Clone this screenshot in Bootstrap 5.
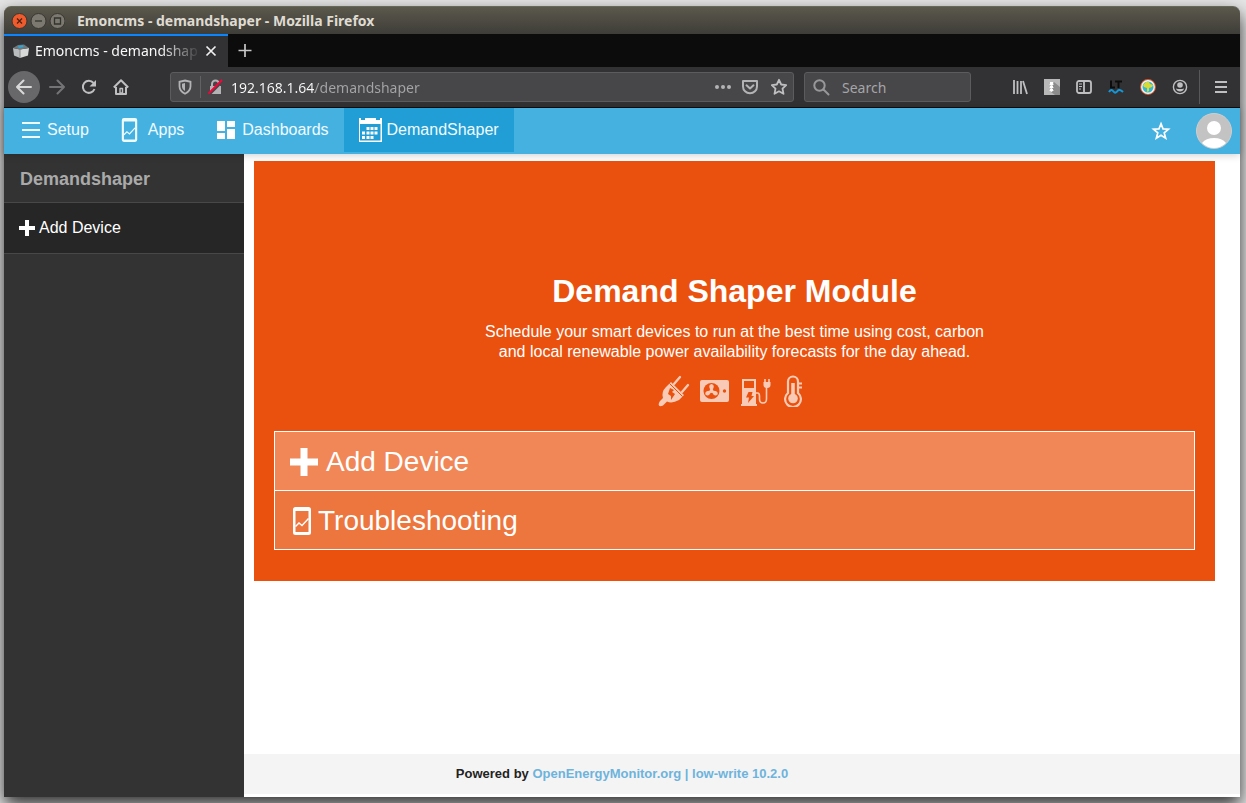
<!DOCTYPE html>
<html lang="en">
<head>
<meta charset="utf-8">
<meta name="viewport" content="width=device-width, initial-scale=1">
<title>Emoncms - demandshaper</title>
<link rel="stylesheet" href="https://cdn.jsdelivr.net/npm/bootstrap@5.3.0/dist/css/bootstrap.min.css">
<style>
body{background:#e6e6e6;padding:6px 6px 6px 4px;font-family:"Liberation Sans",Arial,sans-serif;font-size:16px;line-height:20px;overflow:hidden}
svg{display:block;flex:none}
a{text-decoration:none}
button{background:none;border:0;padding:0;color:inherit}
.desk-window{min-height:calc(100vh - 12px);border-radius:7px 7px 0 0;box-shadow:0 8px 18px rgba(0,0,0,.8)}
.chrome-ui{font-family:"Noto Sans","Open Sans",sans-serif;font-size:14px}
.title-bar{height:28px;padding-left:7px;background:linear-gradient(#5b584c,#3e3d38);border-radius:7px 7px 0 0;border-top:1px solid #66685a;color:#dfdbd2;font-weight:700}
.title-text{padding-left:12px}
.tab-strip{height:33px;background:#0c0c0d}
.page-tab{width:224px;padding:0 11px 2px 9px;background:#323234;border-top:2px solid #0a84ff;color:#f9f9fa}
.tab-label{width:166px;margin-left:6px;-webkit-mask-image:linear-gradient(90deg,#000 125px,transparent);mask-image:linear-gradient(90deg,#000 125px,transparent)}
.tool-bar{height:41px;background:#323234;border-bottom:1px solid #0c0c0d;color:#bfbfc1;padding:0 13px 0 4px}
.back-btn{width:32px;height:32px;background:#68686a;border-radius:50%;color:#d9d9da}
.nav-gap{gap:16px}
.history-btns{gap:9px}
.field-box{height:30px;background:#474749;border:1px solid #5c5c5e;border-radius:3px}
.url-box{margin-left:41px;padding:0 6px}
.url-divider{width:1px;height:22px;background:#626264;margin:0 7px}
.field-box input{border:0;outline:0;padding:0;background:transparent;height:24px;min-width:0}
.url-input{background:linear-gradient(90deg,#f9f9fa 84px,#a5a5a8 84px)!important;-webkit-background-clip:text!important;background-clip:text!important;-webkit-text-fill-color:transparent}
.search-box{width:167px;margin-left:10px;margin-right:41px;padding-left:8px}
.search-box input{width:110px;color:#b1b1b3}
.search-box input::placeholder{color:#a5a5a8;opacity:1}
.menu-divider{width:1px;height:34px;background:#58585a;margin:0 15px 0 11px}
.app-nav{height:46px;background:#45b1e1;position:relative;box-shadow:0 1px 8px rgba(0,0,0,.2);color:#fff}
.app-link{height:44px;padding:0 15px;gap:4px;color:#f0fbff}
.app-link.active{background:#209ed5}
.side-bar{width:240px;background:#333}
.side-title{height:49px;padding:2px 0 0 16px;border-bottom:1px solid #484848;color:#aaa;font-size:18px;font-weight:700}
.side-link{height:51px;padding-left:15px;gap:4px;background:#262626;border-bottom:1px solid #484848;color:#fff}
.main-pane{background:#fff}
.hero-wrap{padding:7px 25px 0 10px}
.hero{background:#ea510e;padding:110px 20px 31px;color:#fff}
.hero h1{font-size:32px;line-height:40px;font-weight:700;margin:0 0 11px}
.hero p{max-width:520px;margin:0 auto 14px}
.device-icons{gap:10px;height:30px;color:#f9cbb6;margin-bottom:25px;padding-right:8px}
.action-list{border:1px solid #fff}
.action-link{height:58px;padding:2px 15px 0;font-size:28px;line-height:34px;color:#fff;background:#ed753e}
.action-link:first-child{height:59px;background:#f18757;border-bottom:1px solid #fff}
.phone-icon{margin:0 6px 0 2px}
.page-foot{height:40px;margin-bottom:3px;padding-right:240px;background:#f4f4f4;font-size:13px;font-weight:700;color:#222}
.page-foot a{color:#6db3dc}
</style>
</head>
<body>
<svg class="d-none">
  <symbol id="i-plus" viewBox="0 0 28 28"><path d="M10.500 0h7v10.500H28v7H17.500V28h-7V17.500H0v-7h10.500z" fill="currentColor"/></symbol>
  <symbol id="i-phone" viewBox="0 0 20 28"><path fill="currentColor" fill-rule="evenodd" d="M3.500 0h13A2.500 2.500 0 0 1 19 2.500v23a2.500 2.500 0 0 1-2.500 2.500h-13A2.500 2.500 0 0 1 1 25.500v-23A2.500 2.500 0 0 1 3.500 0zM3.500 4v21h13V4z"/><path d="M3.500 19.500l3.500-3.500 3 2.500 6.500-7" fill="none" stroke="currentColor" stroke-width="1.400"/></symbol>
</svg>
<div class="desk-window d-flex flex-column">
  <header class="chrome-ui">
    <div class="title-bar d-flex align-items-center">
      <svg width="54" height="18" viewBox="0 0 54 18" fill="none"><circle cx="8.500" cy="9" r="7.500" fill="#ef5b2c" stroke="#393731"/><path d="M6 6.500l5 5m0-5l-5 5" stroke="#4b2416" stroke-width="1.300"/><circle cx="27.500" cy="9" r="7.500" fill="#7b7970" stroke="#393731"/><path d="M24 9h7" stroke="#33322d" stroke-width="1.300"/><circle cx="46.500" cy="9" r="7.500" fill="#7b7970" stroke="#393731"/><path d="M43.500 6h6v6h-6z" stroke="#33322d" stroke-width="1.300"/></svg>
      <span class="title-text">Emoncms - demandshaper - Mozilla Firefox</span>
    </div>
    <div class="tab-strip d-flex align-items-stretch">
      <div class="page-tab d-flex align-items-center">
        <svg width="16" height="14" viewBox="0 0 16 14"><path d="M0 4l7 1.500V14l-6-2.500z" fill="#b9bdbe"/><path d="M7 5.500L16 4l-1 7.500L7 14z" fill="#d7d9d9"/><path d="M0 4l5-3 6-.500L16 4 7 5.500z" fill="#6d777c"/><path d="M5 2l5-1 .500 2L6 4z" fill="#2ba6d8"/><path d="M7 5.500V14" stroke="#888"/></svg>
        <span class="tab-label text-nowrap">Emoncms - demandshap</span>
        <button class="ms-auto" aria-label="Close tab"><svg width="12" height="12" viewBox="0 0 12 12" stroke="#f0f0f0" stroke-width="1.700"><path d="M1.500 1.500l9 9m0-9l-9 9"/></svg></button>
      </div>
      <button class="px-2 text-white" aria-label="New tab"><svg width="17" height="15" viewBox="0 0 17 15" stroke="#c8c8c9" stroke-width="1.700"><path d="M9 1v13M2.500 7.500h13"/></svg></button>
    </div>
    <div class="tool-bar d-flex align-items-center">
      <div class="d-flex align-items-center nav-gap">
        <div class="d-flex align-items-center history-btns">
        <button class="back-btn d-flex align-items-center justify-content-center" aria-label="Back"><svg width="16" height="16" viewBox="0 0 16 16" fill="none" stroke="currentColor" stroke-width="2" stroke-linecap="round" stroke-linejoin="round"><path d="M15 8H1M7.500 1.500L1 8l6.500 6.500"/></svg></button>
        <button aria-label="Forward"><svg width="16" height="16" viewBox="0 0 16 16" fill="none" stroke="#747476" stroke-width="2" stroke-linecap="round" stroke-linejoin="round"><path d="M1 8h14M8.500 1.500L15 8l-6.500 6.500"/></svg></button>
        </div>
        <button aria-label="Reload"><svg width="16" height="16" viewBox="0 0 16 16" fill="none" stroke="currentColor" stroke-width="2"><path d="M12.500 4A6 6 0 1 0 13.500 10"/><path d="M15 1v6.500H8.500z" fill="currentColor" stroke="none"/></svg></button>
        <button aria-label="Home"><svg width="16" height="16" viewBox="0 0 16 16" fill="none" stroke="currentColor" stroke-width="2" stroke-linejoin="round"><path d="M.800 8.500L8 1.300l7.200 7.200M3 8v7h10V8"/><path d="M7 14V9.500h2.500V14z" stroke-width="1.400"/></svg></button>
      </div>
      <div class="field-box url-box d-flex align-items-center flex-grow-1">
        <svg width="16" height="16" viewBox="0 0 16 16" fill="none" stroke="#b3b3b5" stroke-width="1.800"><path d="M8 1.500l5.500 1.300v4.400c0 3.700-2 5.800-5.500 7.500-3.500-1.700-5.500-3.800-5.500-7.500V2.800z"/><path d="M8 4v8c-2-1.200-3-2.600-3-4.800V4.700z" fill="#b3b3b5" stroke="none"/></svg>
        <span class="url-divider"></span>
        <svg width="15" height="16" viewBox="0 0 15 16"><path d="M2 7h11v8H2z" fill="#b3b3b5"/><path d="M4 8V5a3.500 3.500 0 0 1 7 0v3" fill="none" stroke="#b3b3b5" stroke-width="2"/><path d="M1 15.500L14 2.500" stroke="#474749" stroke-width="3"/><path d="M.500 14.500L14 1" stroke="#ff0039" stroke-width="1.800"/></svg>
        <input class="url-input flex-grow-1 ms-2" type="text" aria-label="Address" value="192.168.1.64/demandshaper">
        <button class="me-2" aria-label="Page actions"><svg width="20" height="16" viewBox="0 0 20 16" fill="#b3b3b5"><circle cx="4" cy="8" r="2"/><circle cx="10" cy="8" r="2"/><circle cx="16" cy="8" r="2"/></svg></button>
        <button aria-label="Save to Pocket"><svg width="18" height="16" viewBox="0 0 18 16" fill="none" stroke="#b3b3b5" stroke-width="2" stroke-linejoin="round"><path d="M2 2h14v5.500a7 6.800 0 0 1-14 0z"/><path d="M5.500 6.300L9 9.500l3.500-3.200" stroke-linecap="round"/></svg></button>
        <button class="ms-2 ps-1" aria-label="Bookmark"><svg width="16" height="18" viewBox="1 0 16 18" fill="none" stroke="#bfbfc1" stroke-width="1.800" stroke-linejoin="round"><path d="M9 1.800l2.200 4.700 5 .6-3.700 3.500 1 5.200L9 13.300l-4.500 2.500 1-5.200L1.800 7.100l5-.6z"/></svg></button>
      </div>
      <div class="field-box search-box d-flex align-items-center">
        <svg width="17" height="17" viewBox="0 0 17 17" fill="none" stroke="#98989a" stroke-width="2" stroke-linecap="round"><circle cx="6.500" cy="6.500" r="5.200"/><path d="M10.500 10.500l5 5"/></svg>
        <input class="ms-2 ps-1" type="text" aria-label="Search" placeholder="Search">
      </div>
      <div class="d-flex align-items-center nav-gap">
        <button aria-label="Library"><svg width="16" height="16" viewBox="0 0 16 16" fill="none" stroke="currentColor" stroke-width="1.800"><path d="M2 1v14M5.500 2v13M9 2v13M11 2l4 13"/></svg></button>
        <button aria-label="Downloads helper"><svg width="16" height="16" viewBox="0 0 16 16"><path d="M0 0h16v16H0z" fill="#b8b8b8"/><path d="M10 3l6 5v8h-5l-4-3z" fill="#8b8b8b"/><path d="M6 3h3v2h1L7.500 7 5 5h1zM6 7h3v1h1l-2.500 2L5 8h1zM6 10h3v1h1l-2.500 2L5 11h1z" fill="#fff"/></svg></button>
        <button aria-label="Sidebars"><svg width="16" height="16" viewBox="0 0 16 16" fill="none" stroke="currentColor" stroke-width="1.800"><rect x="1" y="2" width="14" height="12" rx="2"/><path d="M8 2v12"/><path d="M3 5h3M3 7.500h3M3 10h2" stroke-width="1"/></svg></button>
        <button aria-label="LanguageTool"><svg width="16" height="16" viewBox="0 0 16 16" fill="none" stroke="#0c0c0d" stroke-width="2"><path d="M3 1.500v7h4M7 2.500h7M10.500 2.500V9"/><path d="M1 13c1.500-2.500 3-2.500 4.500-.5s3 1 4-.5 3-1.500 5.500 1" stroke="#1497d8"/></svg></button>
        <button aria-label="Globe"><svg width="16" height="16" viewBox="0 0 16 16"><circle cx="8" cy="8" r="7.300" fill="#35b7d4" stroke="#e75b32" stroke-width="1.200"/><circle cx="8" cy="8" r="6.200" fill="none" stroke="#f7f2e8" stroke-width="1.400"/><path d="M3 6l3-3 3 0 1 2 3 1-1 2-3 1v3l-2 1V9L4 8z" fill="#d9d934"/></svg></button>
        <button aria-label="Account"><svg width="16" height="16" viewBox="0 0 16 16" fill="none" stroke="currentColor" stroke-width="1.400"><circle cx="8" cy="8" r="6.600"/><circle cx="8" cy="6" r="2.800" fill="currentColor" stroke="none"/><path d="M3.800 9.500q1.200 3 4.200 3t4.200-3q-4.200 1-8.400 0z" fill="currentColor" stroke="none"/></svg></button>
      </div>
      <span class="menu-divider"></span>
      <button aria-label="Menu"><svg width="12" height="14" viewBox="0 0 12 14" fill="currentColor"><path d="M0 1h12v2H0zM0 6h12v2H0zM0 11h12v2H0z"/></svg></button>
    </div>
  </header>

  <nav class="app-nav d-flex align-items-start flex-shrink-0">
    <a href="#" class="app-link d-flex align-items-center"><svg width="24" height="24" viewBox="0 0 24 24" fill="currentColor"><path d="M3 4h18v2H3zM3 11h18v2H3zM3 18h18v2H3z"/></svg>Setup</a>
    <a href="#" class="app-link d-flex align-items-center"><svg class="me-1" width="21" height="24"><use href="#i-phone"/></svg>Apps</a>
    <a href="#" class="app-link d-flex align-items-center"><svg width="24" height="24" viewBox="0 0 24 24" fill="#fff"><path d="M3 3h8v10H3zM13 3h8v6h-8zM3 15h8v6H3zM13 11h8v10h-8z"/></svg>Dashboards</a>
    <a href="#" class="app-link active d-flex align-items-center"><svg width="24" height="24" viewBox="0 0 24 24" fill="#fff"><path fill-rule="evenodd" d="M0 0h2v2h4V0h11v2h4V0h2v24H0zM1 6v16.500h20.500V6z"/><path d="M7.500 9h3v3h-3zM11.500 9h3v3h-3zM15.500 9h3v3h-3zM3 13.500h3v3H3zM7.500 13.500h3v3h-3zM11.500 13.500h3v3h-3zM15.500 13.500h3v3h-3zM3 18h3v3H3zM7.500 18h3v3h-3zM11.500 18h3v3h-3z"/></svg>DemandShaper</a>
    <div class="ms-auto d-flex align-items-center h-100 pe-2">
      <button class="me-4" aria-label="Bookmark page"><svg width="22" height="22" viewBox="0 0 24 24" fill="none" stroke="#fff" stroke-width="1.800"><path d="M12 4l2.200 5.700 6 .4-4.700 3.900 1.600 5.900L12 16.600l-5.100 3.300 1.600-5.900-4.700-3.900 6-.4z"/></svg></button>
      <button aria-label="Profile"><svg width="36" height="36" viewBox="0 0 36 36"><circle cx="18" cy="18" r="17.500" fill="#c3c3c3" stroke="#d2cdca"/><circle cx="18" cy="15" r="7" fill="#fff"/><path d="M6 30q4-5 12-5t12 5q-5 5-12 5t-12-5z" fill="#fff"/></svg></button>
    </div>
  </nav>

  <div class="d-flex flex-grow-1">
    <aside class="side-bar flex-shrink-0">
      <div class="side-title d-flex align-items-center">Demandshaper</div>
      <a href="#" class="side-link d-flex align-items-center"><svg width="16" height="16"><use href="#i-plus"/></svg>Add Device</a>
    </aside>
    <div class="main-pane d-flex flex-column flex-grow-1">
      <main class="hero-wrap flex-grow-1">
        <section class="hero">
          <h1 class="text-center">Demand Shaper Module</h1>
          <p class="text-center">Schedule your smart devices to run at the best time using cost, carbon and local renewable power availability forecasts for the day ahead.</p>
          <div class="device-icons d-flex justify-content-center align-items-center">
            <svg width="32" height="32" viewBox="0 0 32 32"><path fill="currentColor" d="M13 7L26 20 21 25Q14 29 9 26.500L5 30.500Q2 32 1 30.500T2 26L5 23Q3 17 8 12z"/><path d="M16 9l6-7M24 17l6-7" stroke="currentColor" stroke-width="2.300" stroke-linecap="round"/><path d="M11.500 8.500l13 13" stroke="#ea510e" stroke-width="1"/><path d="M12 13l4 2-2 2 3 2-4 6 0-4-3-2z" fill="#ea510e"/></svg>
            <svg width="30" height="32" viewBox="0 0 30 32"><rect x="0" y="5" width="29" height="22" rx="2" fill="currentColor"/><circle cx="11.500" cy="16" r="8" fill="#ea510e"/><g fill="currentColor" transform="translate(-.5 0)"><circle cx="12" cy="16" r="2"/><path d="M11 15q-3-5 1-6 4 1 1 6z"/><path d="M11 15q-3-5 1-6 4 1 1 6z" transform="rotate(120 12 16)"/><path d="M11 15q-3-5 1-6 4 1 1 6z" transform="rotate(240 12 16)"/></g><circle cx="24.500" cy="16" r="1.700" fill="#ea510e"/></svg>
            <svg width="32" height="32" viewBox="0 0 32 32"><path fill="currentColor" fill-rule="evenodd" d="M2 4h14v25h1v2H1v-2h1zM4 6v7h10V6z"/><path d="M8.500 17h4l-1 4h2.500l-6 7 1-5.500H6z" fill="#ea510e"/><path d="M16 18h1.500q2 0 2 3v3q0 4 3.500 4t3.500-4V12M25 4v4M29 4v4" fill="none" stroke="currentColor" stroke-width="1.600"/><path d="M23.500 7h7v3q0 3-3.500 3t-3.500-3z" fill="currentColor"/></svg>
            <svg width="22" height="32" viewBox="0 0 22 32" fill="none" stroke="currentColor"><path d="M6 18V6.500a5 5 0 0 1 10 0V18a7.900 7.900 0 1 1-10 0z" stroke-width="2.200"/><circle cx="11" cy="23.500" r="4.800" fill="currentColor" stroke="none"/><path d="M11 8v14" stroke-width="3.600"/><path d="M16 8.500h4M16 12.500h4" stroke-width="2"/></svg>
          </div>
          <div class="action-list">
            <a href="#" class="action-link d-flex align-items-center"><svg class="me-2" width="28" height="28"><use href="#i-plus"/></svg>Add Device</a>
            <a href="#" class="action-link d-flex align-items-center"><svg class="phone-icon" width="20" height="28"><use href="#i-phone"/></svg>Troubleshooting</a>
          </div>
        </section>
      </main>
      <footer class="page-foot d-flex align-items-center justify-content-center"><span>Powered by <a href="#">OpenEnergyMonitor.org | low-write 10.2.0</a></span></footer>
    </div>
  </div>
</div>
<script src="https://cdn.jsdelivr.net/npm/bootstrap@5.3.0/dist/js/bootstrap.bundle.min.js"></script>
</body>
</html>
